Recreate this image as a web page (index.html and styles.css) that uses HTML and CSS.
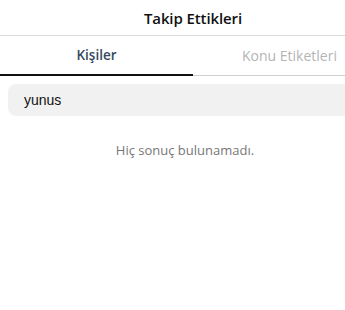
FILE: index.html
```html
<!DOCTYPE html>
<html lang="tr">
<head>
<meta charset="utf-8">
<link rel="stylesheet" href="styles.css">
</head>
<body>
<div class="page">
  <header class="header"><h1 class="title">Takip Ettikleri</h1></header>
  <nav class="tabs">
    <div class="tab active">Kişiler</div>
    <div class="tab">Konu Etiketleri</div>
  </nav>
  <div class="search-wrap">
    <div class="search">yunus</div>
  </div>
  <p class="empty">Hiç sonuç bulunamadı.</p>
</div>
</body>
</html>
```
FILE: styles.css
```css
html, body { margin: 0; padding: 0; background: #fff; overflow: hidden; }
.page { width: 386px; font-family: "Open Sans", "Noto Sans", sans-serif; }
.header { height: 35px; border-bottom: 1px solid #dcdcdc; display: flex; align-items: center; justify-content: center; }
.title { margin: 0; font-size: 15px; font-weight: 600; color: #111; letter-spacing: -0.1px; }
.tabs { display: flex; height: 40px; }
.tab { flex: 1; display: flex; align-items: center; justify-content: center; font-size: 14px; color: #b4b4b4; border-bottom: 1px solid #cfcfcf; }
.tab.active { color: #34495e; font-size: 13.5px; font-weight: 600; border-bottom: 2px solid #111; }
.search-wrap { padding: 8px 0 0 8px; }
.search { height: 32px; background: #f1f1f1; border-radius: 8px; display: flex; align-items: center; padding-left: 16px; font-family: "Liberation Sans", Arial, sans-serif; font-size: 14px; color: #111; }
.empty { margin: 25px 0 0 0; padding-right: 16px; text-align: center; font-size: 13px; color: #777; }
```
